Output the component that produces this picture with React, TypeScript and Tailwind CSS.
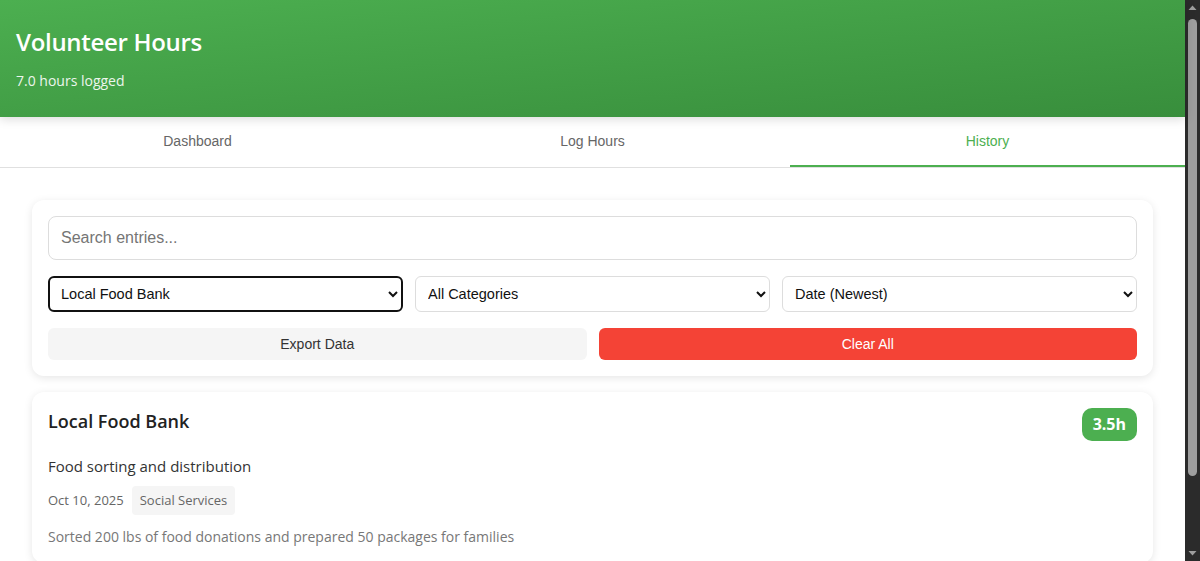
import { useState } from "react";

const tabs = ["Dashboard", "Log Hours", "History"];

function Scrollbar() {
  return (
    <div className="flex w-[15px] shrink-0 flex-col items-center bg-[#2b2b2b]">
      <svg width="15" height="15" viewBox="0 0 15 15" className="shrink-0">
        <path d="M3.5 10 L7.5 5.5 L11.5 10 Z" fill="#9e9e9e" />
      </svg>
      <div className="mt-[4px] h-[457px] w-[9px] rounded-full bg-[#9e9e9e]" />
      <div className="flex-1" />
      <svg width="15" height="15" viewBox="0 0 15 15" className="shrink-0">
        <path d="M3.5 5 L7.5 9.5 L11.5 5 Z" fill="#9e9e9e" />
      </svg>
    </div>
  );
}

export default function App() {
  const [active, setActive] = useState("History");

  return (
    <div className="flex h-screen overflow-hidden bg-white font-['Open_Sans',sans-serif] text-[#333]">
      <div className="min-w-0 flex-1">
        <header className="relative z-10 h-[117px] bg-gradient-to-br from-[#4caf50] to-[#388e3c] px-4 pt-[27px] text-white shadow-[0_2px_10px_rgba(0,0,0,0.15)]">
          <h1 className="text-[24px] leading-[30px] font-semibold tracking-[-0.3px]">Volunteer Hours</h1>
          <p className="mt-[14px] text-[14px] leading-5 opacity-90">7.0 hours logged</p>
        </header>

        <nav className="flex border-b border-[#e0e0e0] bg-white font-['Liberation_Sans',Arial,sans-serif]">
          {tabs.map((t) => (
            <button
              key={t}
              onClick={() => setActive(t)}
              className={
                t === active
                  ? "h-[50px] flex-1 border-b-2 border-[#4caf50] text-[14px] text-[#4caf50]"
                  : "h-[50px] flex-1 border-b-2 border-transparent text-[14px] text-[#666]"
              }
            >
              {t}
            </button>
          ))}
        </nav>

        <main className="flex flex-col gap-4 px-8 pt-8 pb-[88px]">
          <section className="rounded-xl bg-white p-4 shadow-[0_2px_8px_rgba(0,0,0,0.1)] font-['Liberation_Sans',Arial,sans-serif]">
            <input
              type="text"
              placeholder="Search entries..."
              className="h-[44px] w-full rounded-lg border border-[#ddd] px-3 text-[16px] text-[#333] placeholder:text-[#757575] outline-none"
            />
            <div className="mt-4 grid grid-cols-3 gap-3">
              <select className="h-[36px] rounded-md border-2 border-[#111] px-[7px] text-[14.5px] text-[#111] bg-white outline-none">
                <option>Local Food Bank</option>
                <option>All Organizations</option>
              </select>
              <select className="h-[36px] rounded-md border border-[#ddd] px-[8px] text-[14.5px] text-[#111] bg-white outline-none">
                <option>All Categories</option>
                <option>Social Services</option>
              </select>
              <select className="h-[36px] rounded-md border border-[#ddd] px-[8px] text-[14.5px] text-[#111] bg-white outline-none">
                <option>Date (Newest)</option>
                <option>Date (Oldest)</option>
              </select>
            </div>
            <div className="mt-4 grid grid-cols-2 gap-3">
              <button className="h-[32px] rounded-md bg-[#f5f5f5] text-[14px] text-[#333]">Export Data</button>
              <button className="h-[32px] rounded-md bg-[#f44336] text-[14px] text-white">Clear All</button>
            </div>
          </section>

          <article className="rounded-xl bg-white p-4 shadow-[0_2px_8px_rgba(0,0,0,0.1)]">
            <div className="flex items-start justify-between">
              <h2 className="pt-[1px] text-[18px] leading-6 font-semibold text-[#222]">Local Food Bank</h2>
              <span className="rounded-[10px] bg-[#4caf50] px-[11px] py-[6px] text-[16px] leading-[21px] font-bold text-white">3.5h</span>
            </div>
            <p className="mt-[15px] text-[15px] leading-[20px] text-[#333]">Food sorting and distribution</p>
            <div className="mt-[10px] flex items-center gap-2">
              <span className="text-[13px] text-[#666]">Oct 10, 2025</span>
              <span className="rounded bg-[#f5f5f5] px-2 py-[6px] text-[13px] leading-[17px] text-[#666]">Social Services</span>
            </div>
            <p className="mt-[12px] text-[14px] leading-5 text-[#777]">Sorted 200 lbs of food donations and prepared 50 packages for families</p>
          </article>
        </main>
      </div>
      <Scrollbar />
    </div>
  );
}
